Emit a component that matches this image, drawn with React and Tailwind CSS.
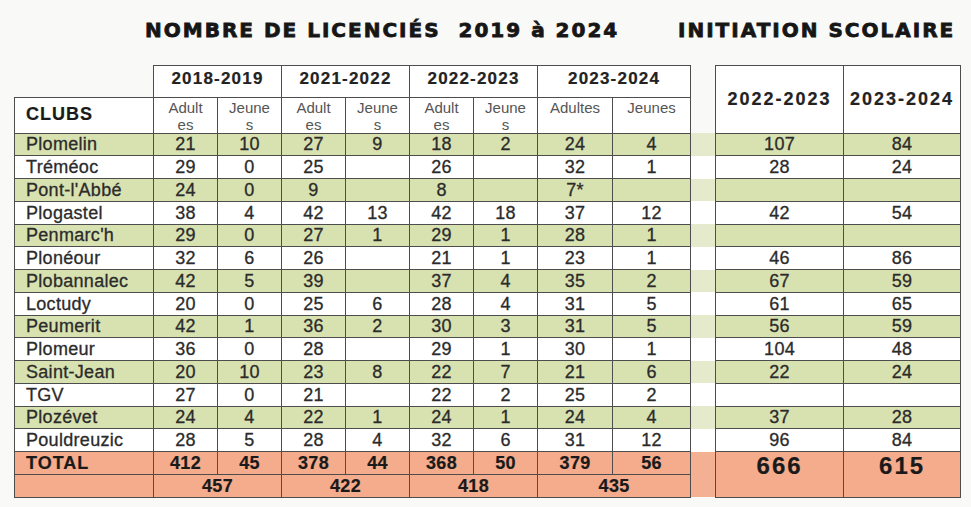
import React from "react";

const rows = [
  ["Plomelin", "21", "10", "27", "9", "18", "2", "24", "4", "107", "84"],
  ["Tréméoc", "29", "0", "25", "", "26", "", "32", "1", "28", "24"],
  ["Pont-l'Abbé", "24", "0", "9", "", "8", "", "7*", "", "", ""],
  ["Plogastel", "38", "4", "42", "13", "42", "18", "37", "12", "42", "54"],
  ["Penmarc'h", "29", "0", "27", "1", "29", "1", "28", "1", "", ""],
  ["Plonéour", "32", "6", "26", "", "21", "1", "23", "1", "46", "86"],
  ["Plobannalec", "42", "5", "39", "", "37", "4", "35", "2", "67", "59"],
  ["Loctudy", "20", "0", "25", "6", "28", "4", "31", "5", "61", "65"],
  ["Peumerit", "42", "1", "36", "2", "30", "3", "31", "5", "56", "59"],
  ["Plomeur", "36", "0", "28", "", "29", "1", "30", "1", "104", "48"],
  ["Saint-Jean", "20", "10", "23", "8", "22", "7", "21", "6", "22", "24"],
  ["TGV", "27", "0", "21", "", "22", "2", "25", "2", "", ""],
  ["Plozévet", "24", "4", "22", "1", "24", "1", "24", "4", "37", "28"],
  ["Pouldreuzic", "28", "5", "28", "4", "32", "6", "31", "12", "96", "84"],
];

const seasons = ["2018-2019", "2021-2022", "2022-2023", "2023-2024"];
const totals = ["412", "45", "378", "44", "368", "50", "379", "56"];
const sums = ["457", "422", "418", "435"];

const cell = "border border-[#4d4d4d]";
const sub = `${cell} bg-white p-0 pt-[1px] align-top text-[15px] leading-[17px] font-normal text-[#555]`;

export default function App() {
  return (
    <div className="w-[971px] h-[507px] bg-[#f9f9f7] overflow-hidden font-['Liberation_Sans',Arial,sans-serif]">
      <div className="grid grid-cols-[533px_auto] pl-[145px] pt-[18px] font-['DejaVu_Sans',sans-serif] font-bold text-[20px] leading-[24px] tracking-[2px] text-[#161616] [-webkit-text-stroke:0.8px_#161616]">
        <span className="whitespace-pre">NOMBRE DE LICENCIÉS  2019 à 2024</span>
        <span>INITIATION SCOLAIRE</span>
      </div>

      <div className="pl-[14px] mt-[23px]">
        <table className="border-collapse table-fixed w-[946px] text-[#2b2b2b]">
          <colgroup>
            <col className="w-[139px]" />
            <col className="w-[64px]" />
            <col className="w-[64px]" />
            <col className="w-[64px]" />
            <col className="w-[64px]" />
            <col className="w-[64px]" />
            <col className="w-[64px]" />
            <col className="w-[75px]" />
            <col className="w-[78px]" />
            <col className="w-[25px]" />
            <col className="w-[128px]" />
            <col className="w-[117px]" />
          </colgroup>
          <thead>
            <tr className="h-[30px]">
              <th className="border-0 p-0"></th>
              {seasons.map((s) => (
                <th
                  key={s}
                  colSpan={2}
                  className={`${cell} bg-white p-0 pb-[5px] text-[17px] font-bold tracking-[1.2px] text-[#222] align-middle [-webkit-text-stroke:0.2px_#222]`}
                >
                  {s}
                </th>
              ))}
              <th className="border-0 p-0"></th>
              <th
                rowSpan={2}
                className={`${cell} bg-white p-0 text-[18px] font-bold tracking-[2px] text-[#222] align-middle [-webkit-text-stroke:0.2px_#222]`}
              >
                2022-2023
              </th>
              <th
                rowSpan={2}
                className={`${cell} bg-white p-0 text-[18px] font-bold tracking-[2px] text-[#222] align-middle [-webkit-text-stroke:0.2px_#222]`}
              >
                2023-2024
              </th>
            </tr>
            <tr className="h-[36px]">
              <th className={`${cell} bg-white p-0 pl-[11px] pt-[3px] text-left align-top text-[18px] font-bold tracking-[1px] text-[#1a1a1a] [-webkit-text-stroke:0.2px_#1a1a1a]`}>
                CLUBS
              </th>
              {[0, 1, 2].map((i) => (
                <React.Fragment key={i}>
                  <th className={sub}>
                    Adult
                    <br />
                    es
                  </th>
                  <th className={sub}>
                    Jeune
                    <br />s
                  </th>
                </React.Fragment>
              ))}
              <th className={sub}>Adultes</th>
              <th className={sub}>Jeunes</th>
              <th className="border-0 p-0"></th>
            </tr>
          </thead>
          <tbody className="text-[18px] leading-none tracking-[0.3px] [-webkit-text-stroke:0.3px_#2b2b2b]">
            {rows.map((r, idx) => {
              const green = idx % 2 === 0;
              const bg = green ? "bg-[#d8e1b0]" : "bg-white";
              return (
                <tr key={r[0]} className="h-[22.75px]">
                  <td className={`${cell} ${bg} p-0 pl-[11px] text-left`}>{r[0]}</td>
                  {r.slice(1, 9).map((v, i) => (
                    <td key={i} className={`${cell} ${bg} p-0 text-center`}>
                      {v}
                    </td>
                  ))}
                  <td className={`border-0 p-0 ${green ? "bg-[#e4eacb]" : "bg-white"}`}></td>
                  {r.slice(9).map((v, i) => (
                    <td key={i} className={`${cell} ${bg} p-0 text-center`}>
                      {v}
                    </td>
                  ))}
                </tr>
              );
            })}
            <tr className="h-[22.75px] bg-[#f4ac8d] font-bold text-[#1a1a1a] [-webkit-text-stroke:0.2px_#1a1a1a]">
              <td className={`${cell} p-0 pl-[11px] text-left tracking-[1px]`}>TOTAL</td>
              {totals.map((v, i) => (
                <td key={i} className={`${cell} p-0 text-center`}>
                  {v}
                </td>
              ))}
              <td rowSpan={2} className="border-0 p-0 bg-[#f4b093]"></td>
              <td rowSpan={2} className={`${cell} p-0 pt-[1px] align-top text-center text-[24px] leading-[26px] tracking-[2px]`}>
                666
              </td>
              <td rowSpan={2} className={`${cell} p-0 pt-[1px] align-top text-center text-[24px] leading-[26px] tracking-[2px]`}>
                615
              </td>
            </tr>
            <tr className="h-[22.75px] bg-[#f4ac8d] font-bold text-[#1a1a1a] [-webkit-text-stroke:0.2px_#1a1a1a]">
              <td className={`${cell} p-0`}></td>
              {sums.map((v, i) => (
                <td key={i} colSpan={2} className={`${cell} p-0 text-center`}>
                  {v}
                </td>
              ))}
            </tr>
          </tbody>
        </table>
      </div>
    </div>
  );
}
